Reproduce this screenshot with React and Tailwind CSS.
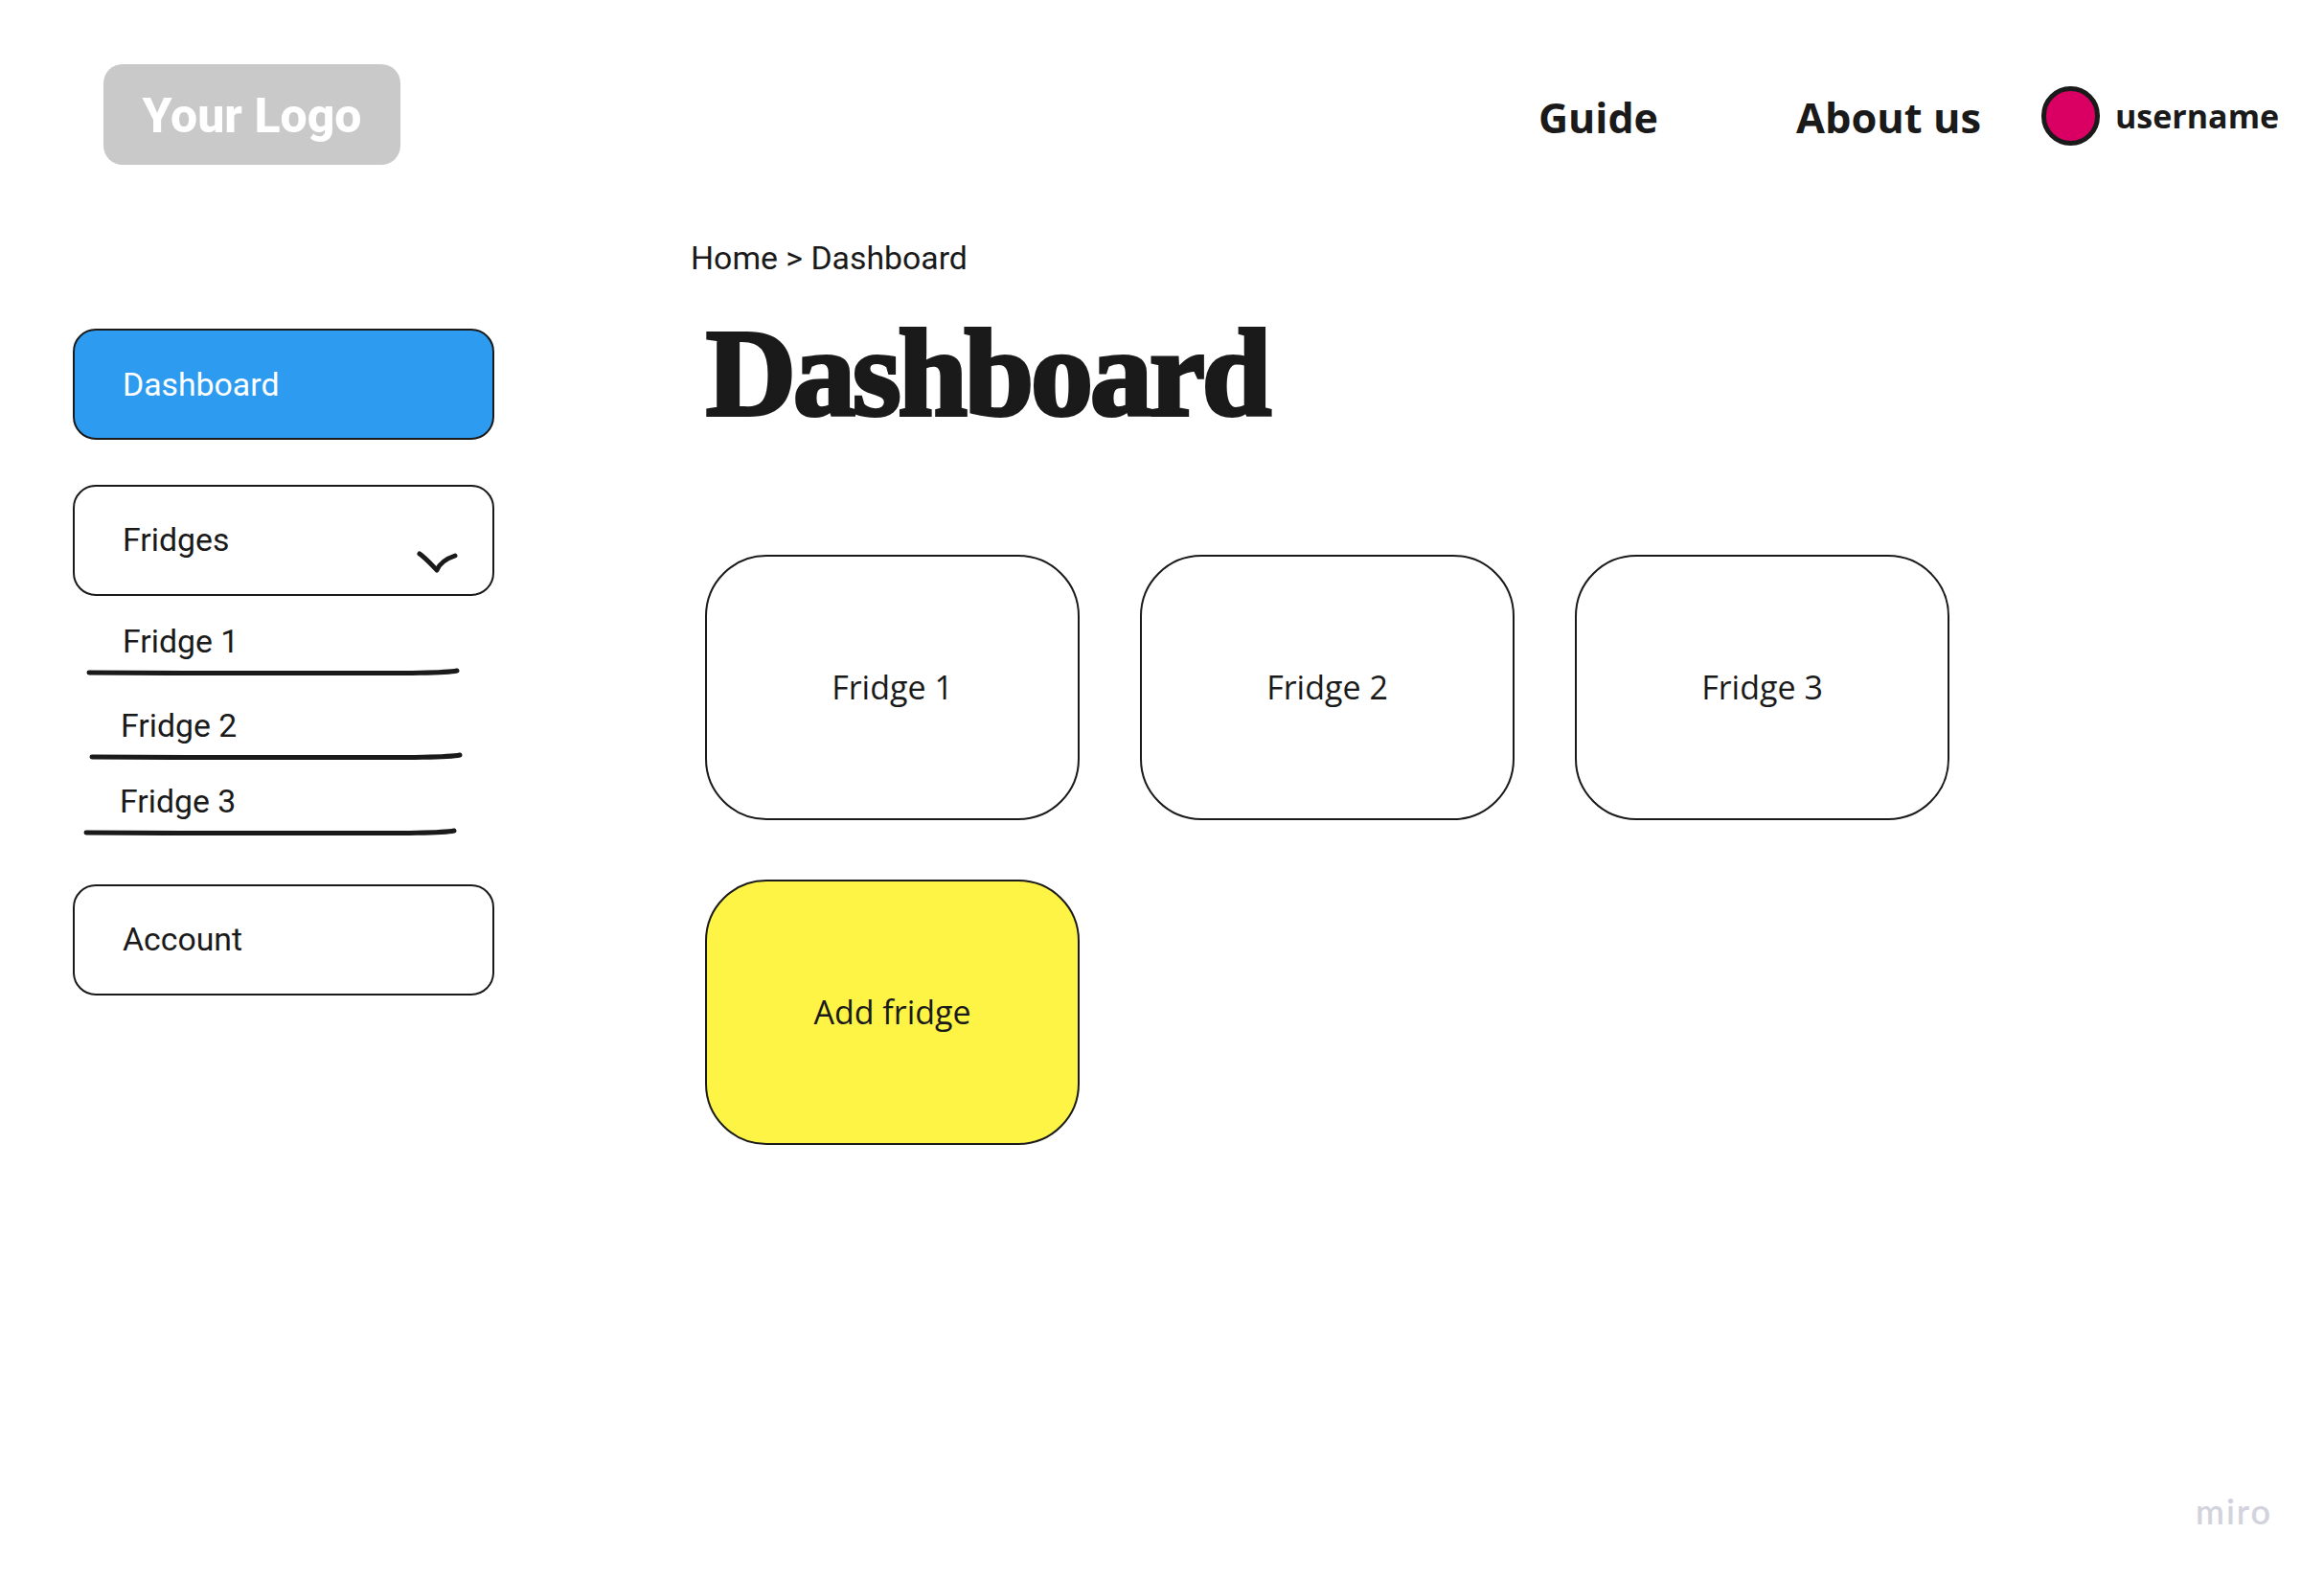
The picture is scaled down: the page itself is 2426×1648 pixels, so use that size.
const roboto = "font-['Roboto',sans-serif]";
const open = "font-['Open_Sans',sans-serif]";

function NavBox({ children, label, active, className = "", textClass = "" }) {
  return (
    <div className={`relative flex h-[116px] w-[440px] items-center rounded-[24px] border-[2.5px] border-[#1a1a1a] pl-[50px] text-[33.8px] ${roboto} ${active ? "bg-[#2d9bf0] text-white" : "bg-white text-[#1a1a1a]"} ${className}`}>
      <span className={textClass}>{label}</span>
      {children}
    </div>
  );
}

function SubItem({ label, textClass, lineClass, height }) {
  return (
    <div className={`flex flex-col ${height}`}>
      <span className={`relative top-[-1px] text-[33.8px] leading-[44px] text-[#1a1a1a] ${roboto} ${textClass}`}>{label}</span>
      <svg className={`mt-[4px] ${lineClass}`} width="390" height="8" viewBox="0 0 390 8" fill="none">
        <path d="M3 5 C 120 6, 260 6, 340 5.4 C 360 5, 378 5, 387 3" stroke="#1a1a1a" strokeWidth="5" strokeLinecap="round" />
      </svg>
    </div>
  );
}

function Card({ label, yellow }) {
  return (
    <div className={`flex h-[277px] w-[391px] items-center justify-center rounded-[64px] border-[2.5px] border-[#1a1a1a] text-[34px] text-[#1a1a1a] ${open} ${yellow ? "bg-[#fef445]" : "bg-white"}`}>
      <span>{label}</span>
    </div>
  );
}

export default function App() {
  return (
    <div className="relative h-[1648px] w-[2426px] overflow-hidden bg-white">
      <header className="flex h-[220px] items-start justify-between pl-[108px] pr-[48px]">
        <div className={`mt-[67px] flex h-[105px] w-[310px] items-center justify-center rounded-[20px] bg-[#c9c9c9] text-[50px] font-extrabold text-white ${roboto}`}>
          <span className="relative top-[2px]">Your Logo</span>
        </div>
        <nav className={`mt-[90px] flex h-[62px] items-center text-[#1a1a1a] ${open}`}>
          <span className="relative top-[2px] text-[43px] font-bold">Guide</span>
          <span className="relative top-[2px] ml-[144px] text-[43.4px] font-bold">About us</span>
          <span className="ml-[63px] h-[62px] w-[61px] rounded-full border-[5px] border-[#1a1a1a] bg-[#da0063]" />
          <span className="ml-[16px] w-[170px] whitespace-nowrap text-[34px] font-bold">username</span>
        </nav>
      </header>
      <div className="flex">
        <aside className="ml-[76px] mt-[123px] flex w-[440px] flex-col">
          <NavBox active label="Dashboard" textClass="relative top-[1px]" />
          <NavBox className="mt-[47px]" label="Fridges">
            <svg className="absolute left-[357px] top-[66px]" width="44" height="26" viewBox="0 0 44 26" fill="none">
              <path d="M3 4 C 10 9, 16 16, 21 21 C 24 14, 31 9, 40 6" stroke="#1a1a1a" strokeWidth="5" strokeLinecap="round" strokeLinejoin="round" />
            </svg>
          </NavBox>
          <SubItem height="mt-[27px] h-[88px]" label="Fridge 1" textClass="ml-[52px]" lineClass="ml-[14px]" />
          <SubItem height="h-[79px]" label="Fridge 2" textClass="ml-[50px]" lineClass="ml-[17px]" />
          <SubItem height="h-[75px]" label="Fridge 3" textClass="ml-[49px]" lineClass="ml-[11px]" />
          <NavBox className="mt-[32px]" label="Account" />
        </aside>
        <main className="ml-[205px] flex flex-col">
          <div className={`mt-[26px] text-[33.8px] leading-[48px] text-[#1a1a1a] ${roboto}`}>Home &gt; Dashboard</div>
          <h1 className="ml-[16px] mt-[10px] h-[185px] font-['Liberation_Serif',serif] text-[130px] font-bold leading-[170px] tracking-[-3px] text-[#1a1a1a] [-webkit-text-stroke:4px_#1a1a1a]">
            Dashboard
          </h1>
          <div className="ml-[15px] mt-[90px] grid grid-cols-[391px_391px_391px] gap-x-[63px] gap-y-[62px]">
            <Card label="Fridge 1" />
            <Card label="Fridge 2" />
            <Card label="Fridge 3" />
            <Card label="Add fridge" yellow />
          </div>
        </main>
      </div>
      <span className="absolute left-[2292px] top-[1550px] font-['Lato',sans-serif] text-[36px] font-semibold tracking-[2px] text-[#d2d3dc]">miro</span>
    </div>
  );
}
